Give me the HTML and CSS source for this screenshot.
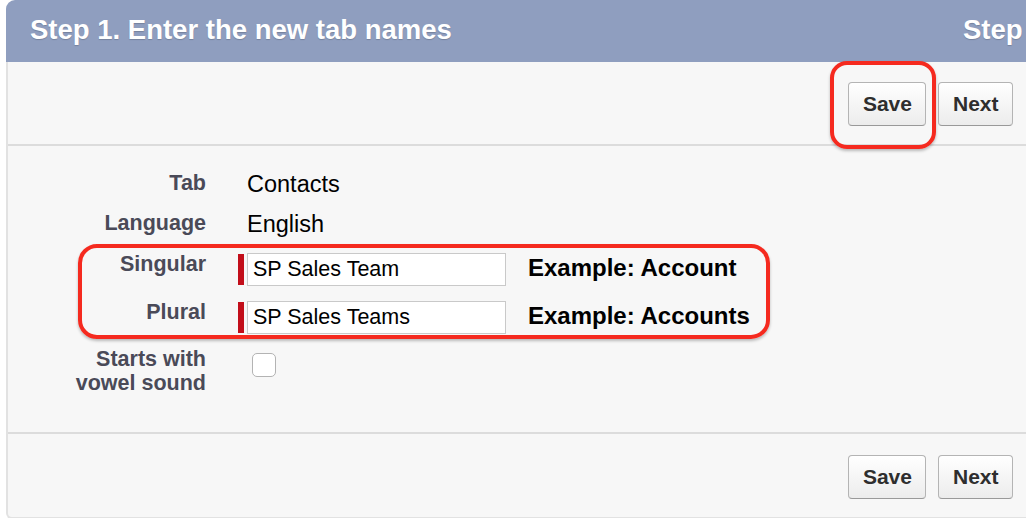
FILE: index.html
```html
<!DOCTYPE html>
<html lang="en">
<head>
<meta charset="utf-8">
<title>Step 1. Enter the new tab names</title>
<link rel="stylesheet" href="styles.css">
</head>
<body>
<div class="panel">
  <div class="panel-header">
    <h2 class="title">Step 1. Enter the new tab names</h2>
    <span class="step-count">Step 1 of 2</span>
  </div>
  <div class="panel-body">
    <div class="button-bar top">
      <span class="callout-btn"><button class="btn">Save</button></span>
      <button class="btn">Next</button>
    </div>
    <div class="form">
      <div class="row text-row">
        <div class="label">Tab</div>
        <div class="value">Contacts</div>
      </div>
      <div class="row text-row">
        <div class="label">Language</div>
        <div class="value">English</div>
      </div>
      <div class="callout-group">
        <div class="row input-row">
          <div class="label">Singular</div>
          <div class="field">
            <span class="required-bar"></span>
            <input class="text-input" type="text" value="SP Sales Team">
            <span class="example">Example: Account</span>
          </div>
        </div>
        <div class="row input-row">
          <div class="label">Plural</div>
          <div class="field">
            <span class="required-bar"></span>
            <input class="text-input" type="text" value="SP Sales Teams">
            <span class="example">Example: Accounts</span>
          </div>
        </div>
      </div>
      <div class="row check-row">
        <div class="label two-line">Starts with<br>vowel sound</div>
        <div class="field">
          <input class="checkbox" type="checkbox">
        </div>
      </div>
    </div>
    <div class="button-bar bottom">
      <button class="btn">Save</button>
      <button class="btn">Next</button>
    </div>
  </div>
</div>
</body>
</html>
```

FILE: styles.css
```css
html, body {
  margin: 0;
  padding: 0;
  background: #ffffff;
}

body {
  font-family: "Liberation Sans", Arial, Helvetica, sans-serif;
  overflow: hidden;
}

.panel {
  margin-left: 6px;
  width: 1020px;
}

.panel-header {
  background: #8f9ebf;
  border-top-left-radius: 9px;
  height: 62px;
  box-sizing: border-box;
  padding: 14px 0 16px 24px;
  display: grid;
  grid-template-columns: 933px max-content;
  overflow: hidden;
  white-space: nowrap;
}

.title,
.step-count {
  margin: 0;
  font-size: 27.5px;
  line-height: 32px;
  font-weight: bold;
  color: #ffffff;
  text-shadow: 0 1px 1px rgba(0, 0, 0, 0.18);
}

.panel-body {
  background: #f7f7f7;
  border-left: 2px solid #e2e2e2;
  border-bottom: 2px solid #e2e2e2;
  border-bottom-left-radius: 6px;
}

.button-bar {
  display: flex;
  justify-content: flex-end;
  gap: 12px;
  padding-right: 13px;
}

.button-bar.top {
  padding-top: 20px;
  padding-bottom: 18px;
  border-bottom: 2px solid #dcdcdc;
}

.button-bar.bottom {
  padding-top: 21px;
  padding-bottom: 18px;
  border-top: 2px solid #dcdcdc;
}

.btn {
  height: 44px;
  padding: 0 13.5px;
  font-family: "Liberation Sans", Arial, Helvetica, sans-serif;
  font-size: 21px;
  font-weight: bold;
  color: #2e2e2e;
  background: linear-gradient(#ffffff, #ececec);
  border: 1px solid #b4b4b4;
  border-bottom-color: #999999;
  border-radius: 4px;
  box-shadow: inset 0 1px 0 #ffffff;
}

.callout-btn {
  position: relative;
  display: inline-flex;
}

.callout-btn::after {
  content: "";
  position: absolute;
  top: -21px;
  bottom: -23px;
  left: -18px;
  right: -10px;
  border: 4px solid #f52a1f;
  border-radius: 17px;
  box-shadow: 0 2px 3px rgba(0, 0, 0, 0.25);
  pointer-events: none;
}

.form {
  padding-top: 24px;
  padding-bottom: 37px;
}

.row {
  display: grid;
  grid-template-columns: 198px 1fr;
  column-gap: 32px;
  align-items: start;
}

.label {
  text-align: right;
  font-size: 21.5px;
  line-height: 26px;
  font-weight: bold;
  color: #4a4a58;
}

.value {
  padding-left: 9px;
  padding-top: 1px;
  font-size: 23.5px;
  line-height: 26px;
  color: #000000;
}

.text-row {
  margin-bottom: 13px;
}

.callout-group {
  position: relative;
  margin-top: 0;
}

.callout-group::after {
  content: "";
  position: absolute;
  top: -6px;
  bottom: -5px;
  left: 70px;
  width: 692px;
  box-sizing: border-box;
  border: 4px solid #f52a1f;
  border-radius: 19px;
  box-shadow: 0 2px 3px rgba(0, 0, 0, 0.25);
  pointer-events: none;
}

.input-row + .input-row {
  margin-top: 12px;
}

.input-row .label {
  padding-top: 1px;
}

.field {
  display: flex;
  align-items: flex-start;
  padding-top: 3px;
}

.required-bar {
  width: 6px;
  height: 31px;
  margin-top: 1px;
  background: #c20e1a;
  margin-right: 3px;
  flex: none;
}

.text-input {
  width: 259px;
  height: 33px;
  box-sizing: border-box;
  margin: 0;
  padding: 0 5px;
  border: 1px solid #c9c9c9;
  border-radius: 0;
  background: #ffffff;
  font-family: "Liberation Sans", Arial, Helvetica, sans-serif;
  font-size: 21.5px;
  color: #000000;
  outline: none;
}

.example {
  margin-left: 22px;
  margin-top: 1px;
  font-size: 24px;
  line-height: 28px;
  font-weight: bold;
  color: #000000;
  white-space: nowrap;
}

.check-row {
  margin-top: 13px;
}

.label.two-line {
  line-height: 24px;
}

.check-row .field {
  padding-top: 6px;
}

.checkbox {
  appearance: none;
  -webkit-appearance: none;
  width: 24px;
  height: 24px;
  margin: 0 0 0 14px;
  border: 1px solid #b3b3b3;
  border-radius: 5px;
  background: #ffffff;
}
```
